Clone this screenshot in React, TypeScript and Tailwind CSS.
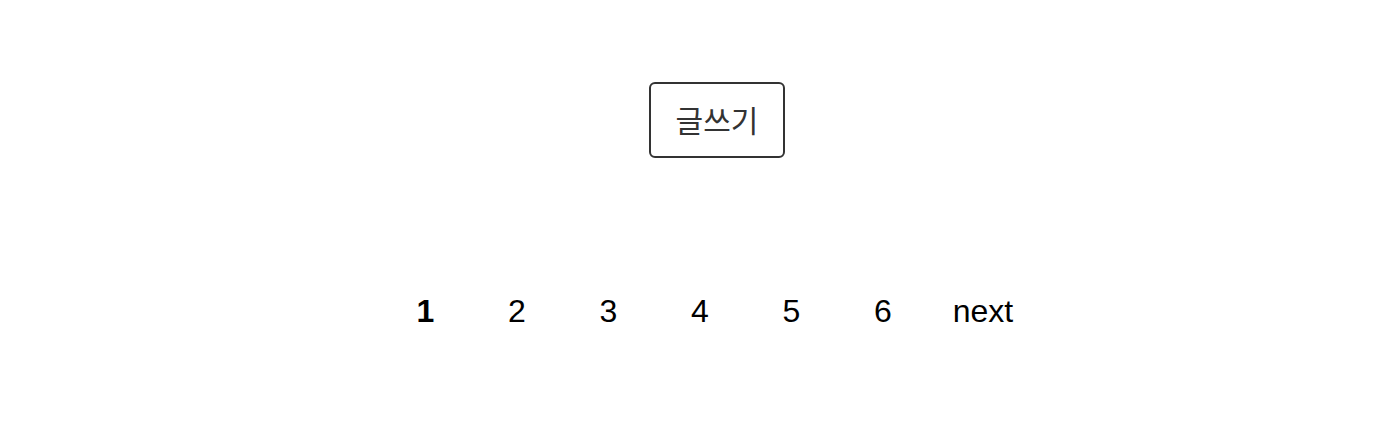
export default function App() {
  const pages = [1, 2, 3, 4, 5, 6];
  const current = 1;

  return (
    <div className="w-full h-[434px] bg-white" style={{ fontFamily: '"Liberation Sans", "Noto Sans CJK KR", sans-serif' }}>
      <div className="flex justify-center pt-[82px] pl-[46px]">
        <button
          className="px-[25px] pt-[15px] pb-[17px] border-2 border-[#333] rounded-md text-[30px] leading-[40px] text-[#333] bg-white"
          style={{ fontFamily: '"Noto Sans CJK KR", "Noto Sans", sans-serif' }}
        >
          글쓰기
        </button>
      </div>

      <ul className="flex justify-center items-center mt-[135px] pl-[5px] text-[32px] leading-[37px] text-black">
        {pages.map((p) => (
          <li key={p} className={`w-[91.5px] text-center ${p === current ? 'font-bold' : ''}`}>
            <a href="#">{p}</a>
          </li>
        ))}
        <li className="ml-[24px]">
          <a href="#">next</a>
        </li>
      </ul>
    </div>
  );
}
